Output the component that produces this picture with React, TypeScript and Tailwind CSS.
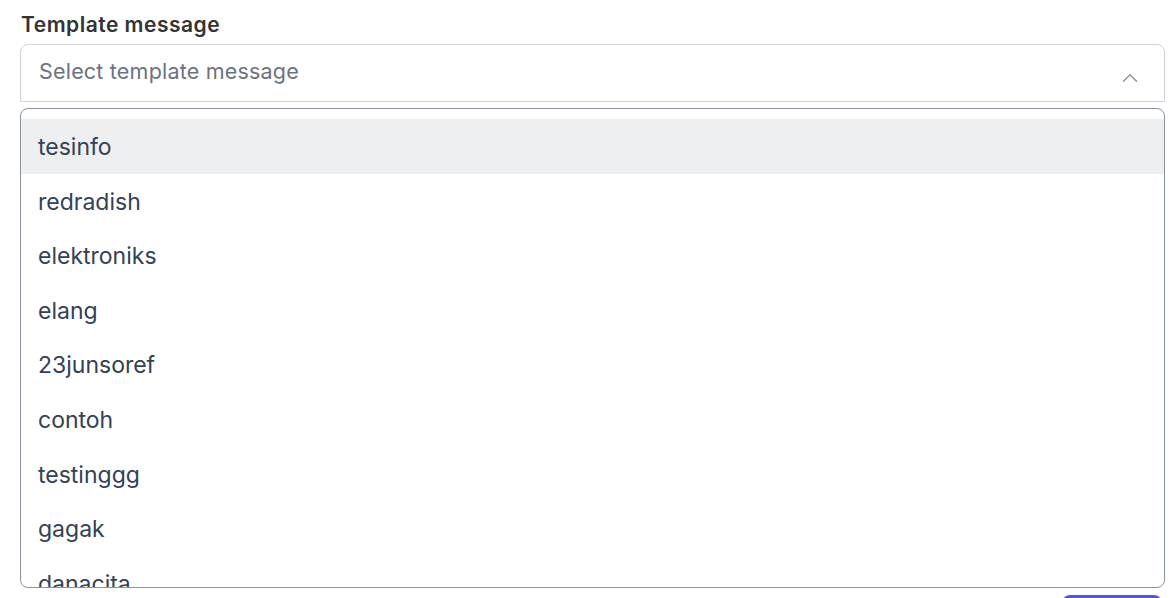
import { ChevronUp } from "lucide-react";

const templates = [
  "tesinfo",
  "redradish",
  "elektroniks",
  "elang",
  "23junsoref",
  "contoh",
  "testinggg",
  "gagak",
  "danacita",
  "promo",
];

export default function App() {
  return (
    <div className="h-screen overflow-hidden bg-white pl-[20px] pr-[11px] pt-[11px] font-['Inter',sans-serif]">
      {/* Label */}
      <label className="block h-[28px] pl-[1px] text-[21px] font-semibold leading-[28px] tracking-[0.5px] text-[#333333]">
        Template message
      </label>

      {/* Select trigger */}
      <div className="mt-[5px] flex h-[58px] items-start justify-between rounded-t-[8px] border border-[#d4d4d8] pl-[18px] pr-[21px] pt-[12px]">
        <span className="text-[21.5px] leading-[28px] tracking-[0.2px] text-[#6b7280]">Select template message</span>
        <ChevronUp className="mt-[8px] h-[26px] w-[26px] text-[#8a8f98]" strokeWidth={1.3} />
      </div>

      {/* Options list */}
      <div className="mt-[6px] h-[480px] overflow-hidden rounded-[8px] border border-[#8b93a4] pt-[10px]">
        {templates.map((name, idx) => (
          <div
            key={name}
            className={
              idx === 0
                ? "flex h-[54.6px] items-center bg-[#eeeff1] pl-[17px] pt-[2px] text-[23px] text-[#334155]"
                : "flex h-[54.6px] items-center pl-[17px] pt-[2px] text-[23px] text-[#334155]"
            }
          >
            {name}
          </div>
        ))}
      </div>

      {/* Submit button (mostly below the fold) */}
      <div className="mt-[7px] flex justify-end pr-[3px]">
        <div className="h-[40px] w-[100px] rounded-[8px] bg-[#4f5bd5]" />
      </div>
    </div>
  );
}
